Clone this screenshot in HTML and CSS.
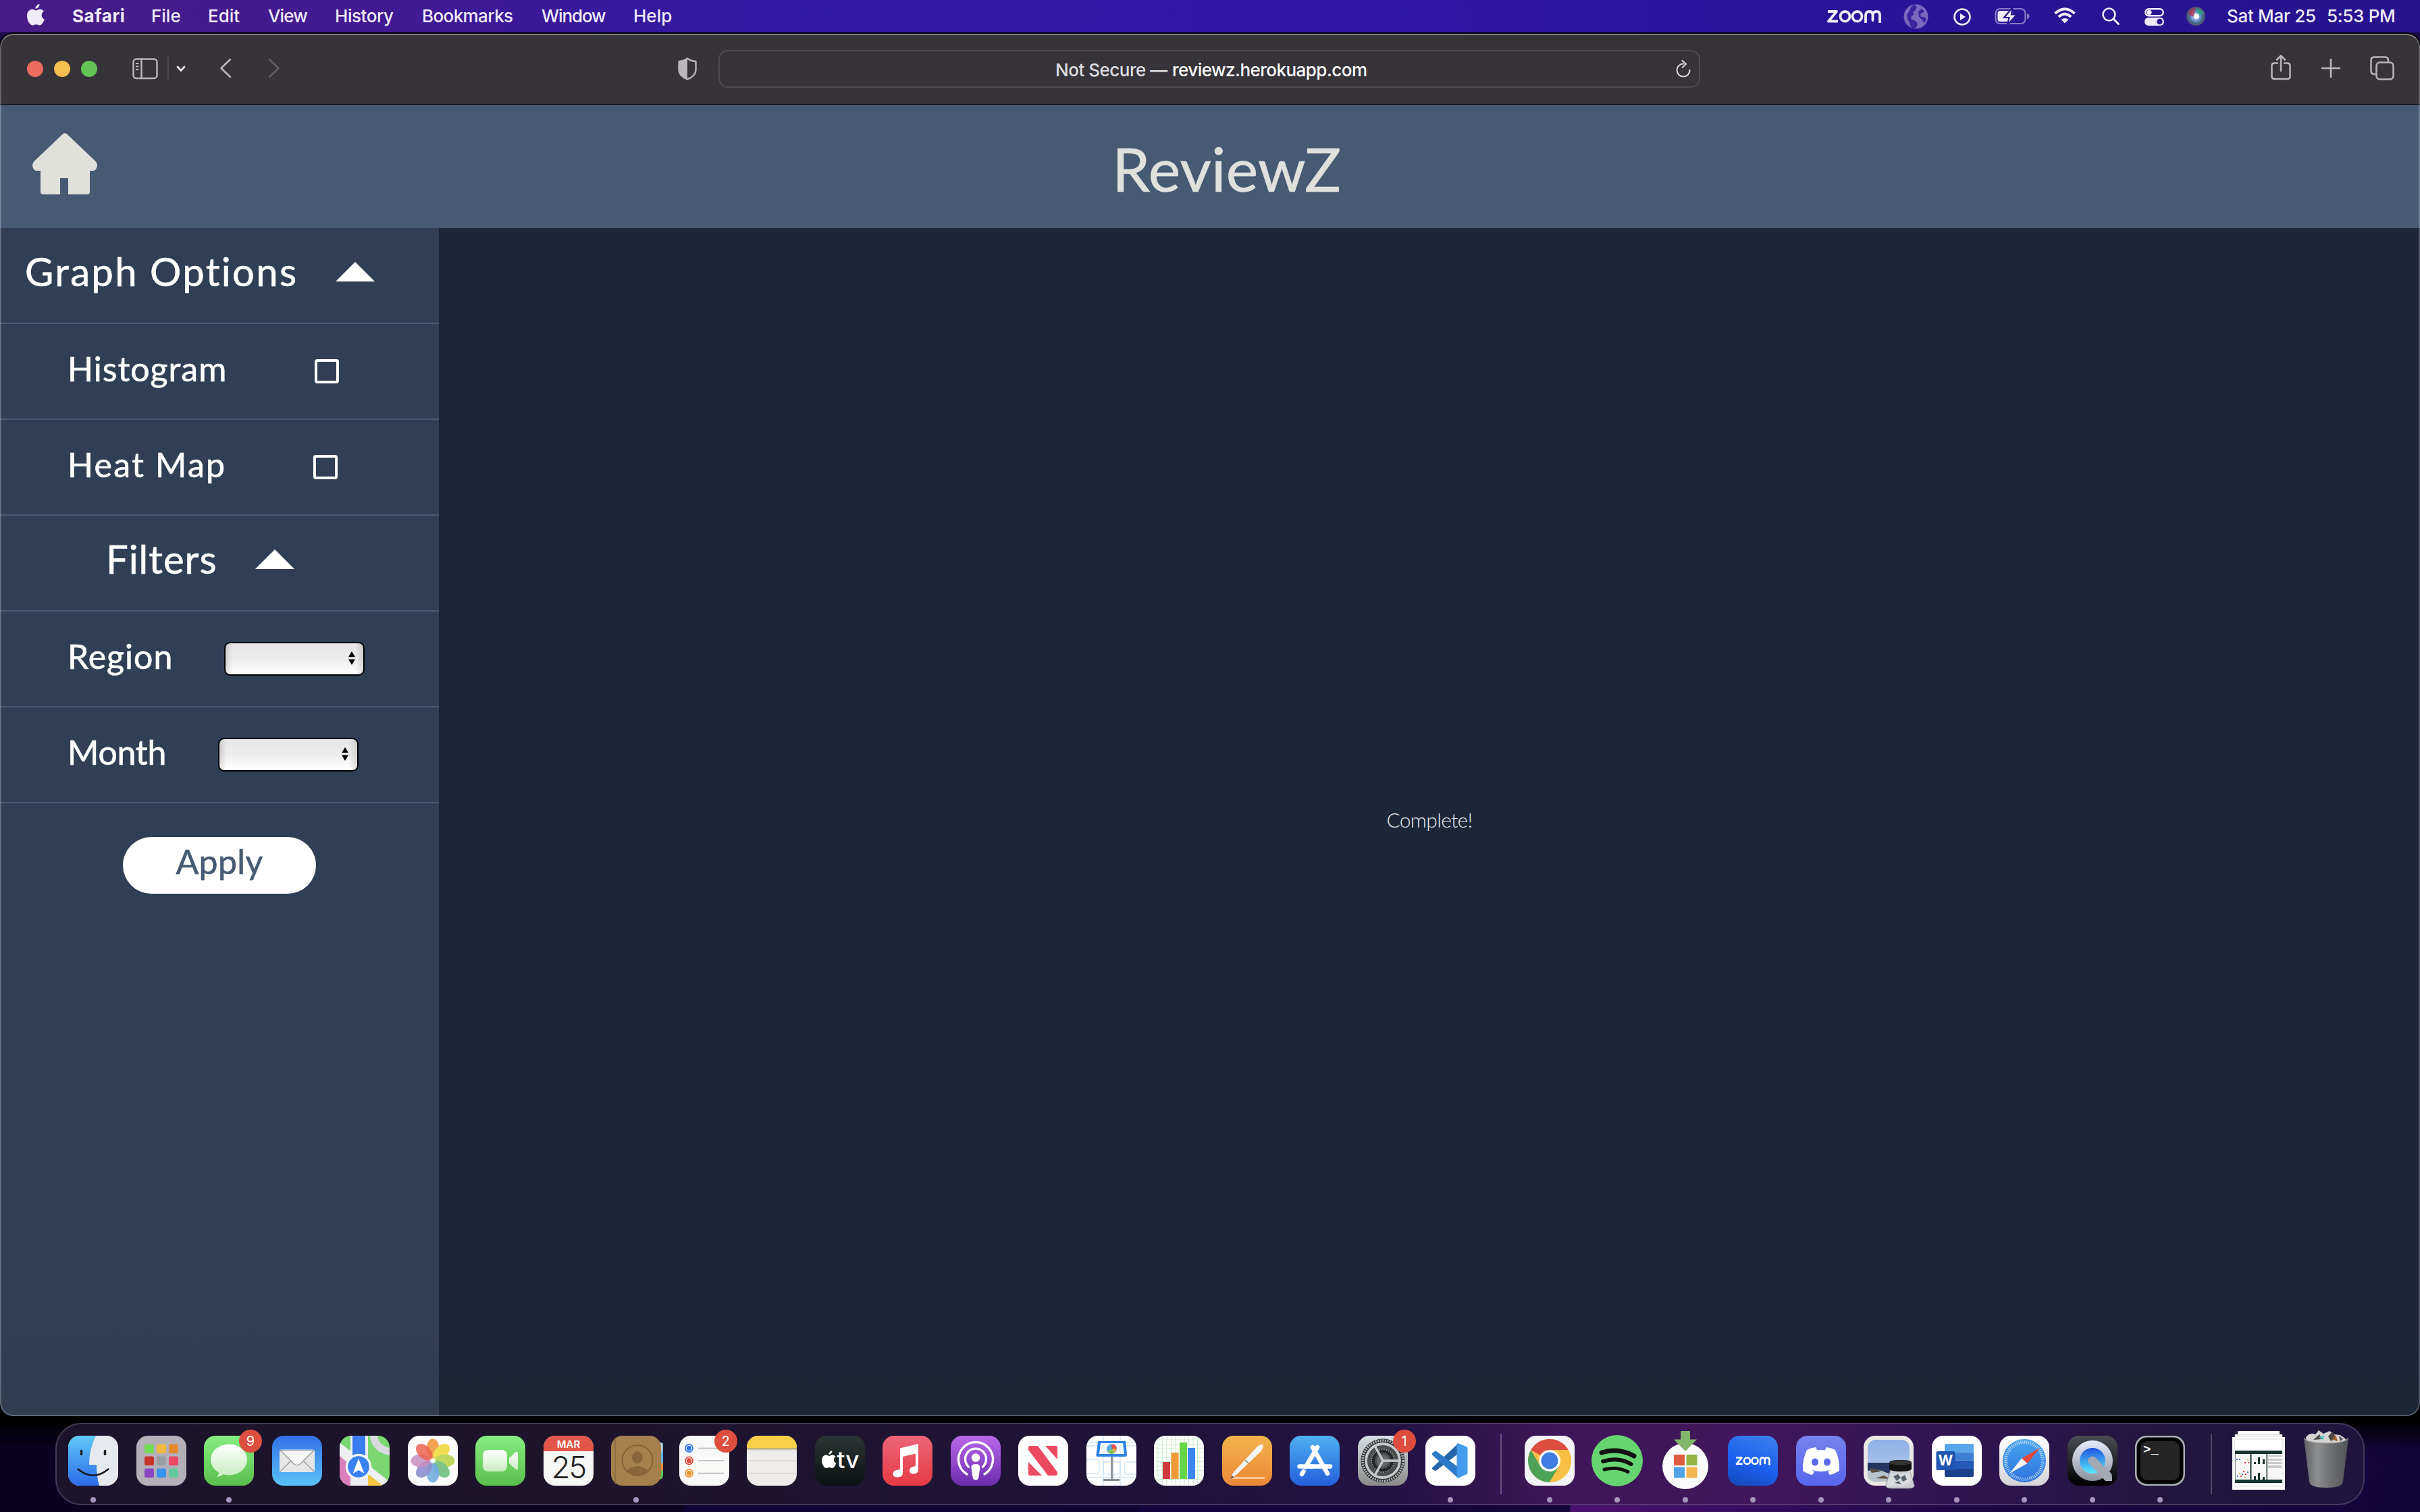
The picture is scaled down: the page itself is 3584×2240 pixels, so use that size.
FILE: index.html
```
<!DOCTYPE html>
<html lang="en">
<head>
<meta charset="utf-8">
<title>ReviewZ</title>
<link rel="stylesheet" href="styles.css">
</head>
<body>
<svg width="0" height="0" class="defs" aria-hidden="true">
  <defs>
    <linearGradient id="bubble" x1="0" y1="0" x2="0" y2="1"><stop offset="0" stop-color="#fff"/><stop offset="1" stop-color="#c9edc2"/></linearGradient>
    <linearGradient id="face" x1="0" y1="0" x2="0" y2="1"><stop offset="0" stop-color="#5fc9f8"/><stop offset="1" stop-color="#2c6be9"/></linearGradient>
    <linearGradient id="steel" x1="0" y1="0" x2="0" y2="1"><stop offset="0" stop-color="#e6ebfa"/><stop offset="1" stop-color="#8c929c"/></linearGradient>
    <linearGradient id="qblue" x1="0" y1="0" x2="0" y2="1"><stop offset="0" stop-color="#1e55e0"/><stop offset="1" stop-color="#5ce9fb"/></linearGradient>
    <linearGradient id="compass" x1="0" y1="0" x2="0" y2="1"><stop offset="0" stop-color="#46a4ee"/><stop offset="1" stop-color="#2f74e2"/></linearGradient>
    <linearGradient id="can" x1="0" y1="0" x2="1" y2="0"><stop offset="0" stop-color="#5f6062"/><stop offset=".3" stop-color="#8d8e90"/><stop offset=".6" stop-color="#6f7072"/><stop offset="1" stop-color="#525356"/></linearGradient>
    <linearGradient id="sky" x1="0" y1="0" x2="0" y2="1"><stop offset="0" stop-color="#8eb0e6"/><stop offset="1" stop-color="#b9cdee"/></linearGradient>
    <radialGradient id="siri"><stop offset="0" stop-color="#fff"/><stop offset=".35" stop-color="#8fa8e8"/><stop offset=".75" stop-color="#3d6a8c"/><stop offset="1" stop-color="#5a5268"/></radialGradient>
  </defs>
</svg>

<div class="desktop">
  <header class="menubar">
    <svg class="apple" viewBox="0 0 26 32"><path fill="#efeaf6" d="M18.600 0c.2 3.600-2.800 6.900-6.100 7C12.200 3.700 15.300.5 18.600 0zM13.300 9.500c1.400 0 3.100-1.700 6-1.700 2.400.1 4.400 1.200 5.600 3-4.800 3-4 9.900.9 11.900-1.300 3.900-4.100 8.700-7 8.700-2 0-2.800-1.200-5.200-1.200s-3.300 1.200-5.200 1.200C4.500 31.400 0 24.500 0 17.700c0-6.600 4.100-9.900 7.800-9.900 2.500 0 4.200 1.700 5.500 1.700z"/></svg>
    <nav class="menus">
      <span class="m-safari">Safari</span><span>File</span><span>Edit</span><span class="t9">View</span><span class="t5">History</span><span class="t6">Bookmarks</span><span class="t11">Window</span><span>Help</span>
    </nav>
    <div class="status">
      <svg class="s-zoom" viewBox="0 0 80 22"><g fill="none" stroke="#efeaf6" stroke-width="3.800" stroke-linejoin="round"><path d="M1 4h13L2 18.500h14"/><ellipse cx="26.500" cy="11.300" rx="7" ry="7.300"/><ellipse cx="44.500" cy="11.300" rx="7" ry="7.300"/><path d="M57 21V9.500Q57.500 4 62.500 4T67.500 9.500V17V9.500Q68 4 73 4T78 9.500V21"/></g></svg>
      <svg class="s-globe" viewBox="0 0 37 37"><circle cx="18.500" cy="18.500" r="18" fill="#7c68c0"/><path fill="#2a1496" d="M16 1l4 3-2 5-4 3 1 4-4 3 1 4 6 2 3 4-2 6-5 1Q10 34 9 28L6 22 5 16 9 10Q10 4 16 1zM27 7l4 4-6 4 1 4 4 0 4 3-3 6-4-5-4-4-1-8z" opacity=".8"/></svg>
      <svg class="s-play" viewBox="0 0 26 26"><circle cx="13" cy="13" r="11.500" fill="none" stroke="#efeaf6" stroke-width="2.600"/><path d="M10 7.800v10.400l8-5.200z" fill="#efeaf6"/></svg>
      <svg class="s-batt" viewBox="0 0 52 26"><rect x="1.500" y="2" width="44" height="22" rx="6.500" fill="none" stroke="#8b7cc8" stroke-width="2.200"/><path d="M48 9q3.500 1 3.500 4t-3.500 4z" fill="#8b7cc8"/><rect x="4.500" y="5" width="22" height="16" rx="3.500" fill="#efeaf6"/><path d="M26.500 0L14 15h7.500L19 26 33 10.500h-8z" fill="#efeaf6" stroke="#281391" stroke-width="2.200"/></svg>
      <svg class="s-wifi" viewBox="0 0 32 24"><g fill="none" stroke="#efeaf6" stroke-width="4"><path d="M1.500 9Q16-4.500 30.500 9"/><path d="M6.800 14Q16 5.500 25.200 14"/></g><path d="M10.500 18q5.500-4 11 0L16 23.500z" fill="#efeaf6"/></svg>
      <svg class="s-find" viewBox="0 0 26 26"><circle cx="10.500" cy="10.500" r="9" fill="none" stroke="#efeaf6" stroke-width="2.600"/><path d="M17 17l7.500 7.500" stroke="#efeaf6" stroke-width="3" stroke-linecap="round"/></svg>
      <svg class="s-ctrl" viewBox="0 0 29 26"><rect x="1.300" y="1.300" width="26.400" height="10" rx="5" fill="none" stroke="#efeaf6" stroke-width="2.400"/><circle cx="7" cy="6.300" r="3.600" fill="#efeaf6"/><rect x="0" y="14" width="29" height="12" rx="6" fill="#efeaf6"/><circle cx="22.500" cy="20" r="4.200" fill="#281391"/></svg>
      <svg class="s-siri" viewBox="0 0 28 28"><circle cx="14" cy="14" r="14" fill="url(#siri)"/><path d="M3 8q5-7 11-7-3 8-1 13-8 2-10-6z" fill="#c02b4c" opacity=".7"/><path d="M15 2q10 2 11 9-6 1-10 4z" fill="#2aa57c" opacity=".7"/><circle cx="15" cy="14" r="4" fill="#fff" opacity=".9"/></svg>
      <span class="s-date">Sat Mar 25</span><span class="s-time">5:53 PM</span>
    </div>
  </header>

  <main class="window">
    <div class="toolbar">
      <i class="light red"></i><i class="light yellow"></i><i class="light green"></i>
      <svg class="b-side" viewBox="0 0 38 32"><g fill="none" stroke="#bab7bc" stroke-width="2.400"><rect x="1.500" y="1.500" width="35" height="28.500" rx="4.500"/><path d="M13.500 2v28"/><path d="M5 8h4.500M5 12.500h4.500M5 17h4.500" stroke-width="2"/></g></svg>
      <i class="split"></i>
      <svg class="b-down" viewBox="0 0 14 10"><path d="M2 2l5 5.500L12 2" fill="none" stroke="#e2e0e4" stroke-width="2.800" stroke-linecap="round" stroke-linejoin="round"/></svg>
      <svg class="b-back" viewBox="0 0 18 30"><path d="M16 2L2.500 15 16 28" fill="none" stroke="#bab7bc" stroke-width="2.600" stroke-linecap="round" stroke-linejoin="round"/></svg>
      <svg class="b-fwd" viewBox="0 0 18 30"><path d="M2 2l13.500 13L2 28" fill="none" stroke="#626065" stroke-width="2.600" stroke-linecap="round" stroke-linejoin="round"/></svg>
      <svg class="b-shield" viewBox="0 0 28 34"><path d="M14 1.500q5 4 12.500 4.500V19q0 8-12.500 13.500Q1.500 27 1.500 19V6Q9 5.500 14 1.500z" fill="none" stroke="#bab7bc" stroke-width="2.400" stroke-linejoin="round"/><path d="M14 1.500v31Q1.500 27 1.500 19V6Q9 5.500 14 1.500z" fill="#bab7bc"/></svg>
      <div class="address">
        <span class="insecure">Not Secure —</span><span class="host">reviewz.herokuapp.com</span>
        <svg class="b-reload" viewBox="0 0 22 26"><path d="M11 5.500A9.500 9.500 0 1 0 20.500 15" fill="none" stroke="#d8d6da" stroke-width="2.100" stroke-linecap="round"/><path d="M9.500 1l5.500 4.800-5.200 5" fill="none" stroke="#d8d6da" stroke-width="2.100" stroke-linecap="round" stroke-linejoin="round"/></svg>
      </div>
      <svg class="b-share" viewBox="0 0 30 38"><g fill="none" stroke="#bab7bc" stroke-width="2.500" stroke-linecap="round" stroke-linejoin="round"><path d="M10 12.500H5.500Q1.500 12.500 1.500 16.500V32Q1.500 36 5.500 36h19Q28.500 36 28.500 32V16.500Q28.500 12.500 24.500 12.500H20"/><path d="M15 24V2M9 7.500L15 1.500l6 6"/></g></svg>
      <svg class="b-plus" viewBox="0 0 28 28"><path d="M14 1v26M1 14h26" stroke="#bab7bc" stroke-width="2.600" stroke-linecap="round"/></svg>
      <svg class="b-tabs" viewBox="0 0 36 36"><g fill="none" stroke="#bab7bc" stroke-width="2.500"><rect x="9.500" y="9.500" width="25" height="25" rx="5"/><path d="M8.500 27H6.500q-5 0-5-5V6.500q0-5 5-5H22q5 0 5 5v2"/></g></svg>
    </div>

    <div class="brand">
      <svg class="home" viewBox="0 0 96 92"><path fill="#e1e1dc" d="M45 1.500Q48 -1 51 1.500L93.500 42Q97 46 95.500 50.500Q94 56 89 56H85V87Q85 91 81 91H53V67H41V91H16Q12 91 12 87V56H7Q2 56 .5 50.500Q-1 46 2.500 42z"/></svg>
      <h1>ReviewZ</h1>
    </div>

    <div class="body">
      <aside class="sidebar">
        <div class="row head"><span class="w-graph">Graph Options</span><svg class="tri" viewBox="0 0 58 29"><path d="M29 0l29 29H0z" fill="#fff"/></svg></div>
        <div class="row opt"><span class="w-hist">Histogram</span><i class="check"></i></div>
        <div class="row opt heat"><span class="w-heat">Heat Map</span><i class="check"></i></div>
        <div class="row head filters"><span class="w-filt">Filters</span><svg class="tri" viewBox="0 0 58 29"><path d="M29 0l29 29H0z" fill="#fff"/></svg></div>
        <div class="row pick"><span class="w-reg">Region</span><div class="select"><svg viewBox="0 0 10 20"><path d="M5 0l5 8.300H0zM0 11.700h10L5 20z"/></svg></div></div>
        <div class="row pick second"><span class="w-mon">Month</span><div class="select month"><svg viewBox="0 0 10 20"><path d="M5 0l5 8.300H0zM0 11.700h10L5 20z"/></svg></div></div>
        <div class="apply"><span>Apply</span></div>
      </aside>
      <section class="content"><p>Complete!</p></section>
    </div>
  </main>

  <footer class="dock">
    <div class="cell on"><svg class="icon" viewBox="0 0 74 74"><rect width="74" height="74" fill="#e6e9ee"/><path d="M0 0H41Q31 20 31 43H42Q42 60 46 74H0z" fill="url(#face)"/><path d="M19.500 22.500v5M54.500 22.500v5" stroke="#222" stroke-width="3.600" stroke-linecap="round"/><path d="M14.500 49.500Q37 68 59.500 49.500" fill="none" stroke="#16181c" stroke-width="2.400" stroke-linecap="round"/></svg></div>
    <div class="cell"><svg class="icon" viewBox="0 0 74 74"><rect width="74" height="74" fill="#b3b0b9"/><g><rect x="12" y="12.500" width="14" height="13.500" rx="2.500" fill="#73dc55"/><rect x="30" y="12.500" width="14" height="13.500" rx="2.500" fill="#f2b93f"/><rect x="48" y="12.500" width="14" height="13.500" rx="2.500" fill="#e6892f"/><rect x="12" y="30.500" width="14" height="13.500" rx="2.500" fill="#c7352a"/><rect x="30" y="30.500" width="14" height="13.500" rx="2.500" fill="#989da1"/><rect x="48" y="30.500" width="14" height="13.500" rx="2.500" fill="#ea4863"/><rect x="12" y="48.500" width="14" height="13.500" rx="2.500" fill="#8a45c0"/><rect x="30" y="48.500" width="14" height="13.500" rx="2.500" fill="#3793ee"/><rect x="48" y="48.500" width="14" height="13.500" rx="2.500" fill="#66c89f"/></g></svg></div>
    <div class="cell on"><svg class="icon g-green" viewBox="0 0 74 74"><path d="M23 53q-1 5-4 8 7-1 11-5z" fill="#dff5da"/><ellipse cx="37" cy="35.500" rx="27" ry="23" fill="url(#bubble)"/></svg><b class="badge">9</b></div>
    <div class="cell"><svg class="icon g-mail" viewBox="0 0 74 74"><rect x="11" y="20.500" width="52" height="33.500" rx="2.500" fill="#e6e6e6"/><path d="M12 53L28 37M62 53L46 37" stroke="#9a9a9a" stroke-width="1.400"/><path d="M12 21.500L32 41.500q5 4 10 0L62 21.500z" fill="#f6f6f6" stroke="#9a9a9a" stroke-width="1.200"/></svg></div>
    <div class="cell"><svg class="icon" viewBox="0 0 74 74"><rect width="74" height="74" fill="#7ad772"/><path d="M0 10L74 68V74H0z" fill="#eef0f2"/><path d="M0 30L17 44V74H0z" fill="#d980bd"/><path d="M40 55L64 74H40z" fill="#f4c443"/><path d="M16 0H42V74H16z" fill="#eceef2"/><path d="M19 0H38V40H19z" fill="#3b7df0"/><path d="M50-2Q52 20 76 24" fill="none" stroke="#d9dade" stroke-width="11"/><ellipse cx="28" cy="46" rx="17.500" ry="17.500" fill="#3a82f3" stroke="#f1f3f6" stroke-width="3.500"/><path d="M28 34l8.500 22L28 51l-8.500 5z" fill="#fff"/></svg></div>
    <div class="cell"><svg class="icon" viewBox="0 0 74 74"><rect width="74" height="74" fill="#fcfcfc"/><g opacity=".88"><ellipse cx="37" cy="19" rx="9.500" ry="14.500" fill="#f1973a"/><ellipse cx="37" cy="19" rx="9.500" ry="14.500" fill="#f0d93a" transform="rotate(45 37 37)"/><ellipse cx="37" cy="19" rx="9.500" ry="14.500" fill="#b7d14b" transform="rotate(90 37 37)"/><ellipse cx="37" cy="19" rx="9.500" ry="14.500" fill="#6cbd79" transform="rotate(135 37 37)"/><ellipse cx="37" cy="19" rx="9.500" ry="14.500" fill="#61a2dc" opacity=".9" transform="rotate(180 37 37)"/><ellipse cx="37" cy="19" rx="9.500" ry="14.500" fill="#7f80c8" opacity=".9" transform="rotate(225 37 37)"/><ellipse cx="37" cy="19" rx="9.500" ry="14.500" fill="#c07fb8" opacity=".85" transform="rotate(270 37 37)"/><ellipse cx="37" cy="19" rx="9.500" ry="14.500" fill="#ea4f3c" opacity=".85" transform="rotate(315 37 37)"/></g></svg></div>
    <div class="cell"><svg class="icon g-green" viewBox="0 0 74 74"><rect x="11" y="21" width="36" height="32" rx="8" fill="url(#bubble)"/><path d="M50 33L60 24q3-1 3 2v22q0 3-3 2L50 41z" fill="url(#bubble)"/></svg></div>
    <div class="cell"><svg class="icon" viewBox="0 0 74 74"><rect width="74" height="74" fill="#f7f7f5"/><rect width="74" height="23" fill="#e3574b"/><text x="37" y="18" class="mar">MAR</text><text x="37" y="62.500" class="day">25</text></svg></div>
    <div class="cell on"><svg class="icon wide" viewBox="0 0 78 74"><rect x="50" y="10" width="27" height="55" rx="6" fill="#58c659"/><rect x="50" y="10" width="27" height="42" rx="3" fill="#f09036"/><rect x="50" y="10" width="27" height="31" rx="3" fill="#62b6ea"/><rect x="50" y="10" width="26" height="16" rx="5" fill="#c9c9c4"/><rect width="74" height="74" rx="17" fill="#a5804c"/><path d="M6 3v68" stroke="#8b6a3b" stroke-width="1.500"/><circle cx="39" cy="36.500" r="22.500" fill="none" stroke="#84633a" stroke-width="2"/><ellipse cx="39" cy="32" rx="8" ry="9" fill="#886639"/><path d="M23 52Q39 38 55 52Q39 67 23 52z" fill="#886639"/></svg></div>
    <div class="cell"><svg class="icon" viewBox="0 0 74 74"><rect width="74" height="74" fill="#f9f9f8"/><path d="M28 18.500h38M28 37h38M28 55.500h38" stroke="#b4b4b8" stroke-width="1.600"/><g stroke-width="1.700" fill="#fff"><circle cx="14.500" cy="18.500" r="5.600" stroke="#2f78ec"/><circle cx="14.500" cy="37" r="5.600" stroke="#df4a3c"/><circle cx="14.500" cy="55.500" r="5.600" stroke="#e8912f"/></g><circle cx="14.500" cy="18.500" r="3.700" fill="#2f78ec"/><circle cx="14.500" cy="37" r="3.700" fill="#df4a3c"/><circle cx="14.500" cy="55.500" r="3.700" fill="#e8912f"/></svg><b class="badge">2</b></div>
    <div class="cell"><svg class="icon" viewBox="0 0 74 74"><rect width="74" height="74" fill="#efede9"/><rect width="74" height="19" fill="#f8cf48"/><path d="M0 19.500h74" stroke="#aaa594" stroke-width="1.800"/><path d="M1 22.500h74" stroke="#b5b3ae" stroke-width="1.200" stroke-dasharray="1 1.500"/><path d="M0 37h74M0 55.500h74" stroke="#cfcdca" stroke-width="1.200"/></svg></div>
    <div class="cell"><svg class="icon g-tv" viewBox="0 0 74 74"><path transform="translate(10 22) scale(.83)" fill="#fff" d="M18.600 0c.2 3.600-2.800 6.900-6.100 7C12.200 3.700 15.300.5 18.600 0zM13.300 9.500c1.400 0 3.100-1.700 6-1.700 2.400.1 4.400 1.200 5.600 3-4.800 3-4 9.900.9 11.900-1.300 3.900-4.100 8.700-7 8.700-2 0-2.800-1.200-5.200-1.200s-3.300 1.200-5.200 1.200C4.500 31.400 0 24.500 0 17.700c0-6.600 4.100-9.900 7.800-9.900 2.500 0 4.200 1.700 5.500 1.700z"/><text x="32.500" y="48" class="tv">tv</text></svg></div>
    <div class="cell"><svg class="icon g-music" viewBox="0 0 74 74"><path d="M26 18.500L53 12V50q0 6.500-7 6.500-6 0-6-5 0-5 7-6l2-.5V26.500L30 31V55q0 6.500-7.500 6.500-7 0-7-5 0-5 7-6l3.500-1z" fill="#fff"/></svg></div>
    <div class="cell"><svg class="icon g-pod" viewBox="0 0 74 74"><g fill="none" stroke="#fff" stroke-width="3.400" stroke-linecap="round"><path d="M24 57A25.500 25.500 0 1 1 50 57"/><path d="M26.500 46A15.500 15.500 0 1 1 47.500 46"/></g><circle cx="37" cy="32.500" r="6.300" fill="#fff"/><path d="M30.500 47q0-5 6.500-5t6.500 5l-2 14q-.5 4.500-4.500 4.500T32.500 61z" fill="#fff"/></svg></div>
    <div class="cell"><svg class="icon" viewBox="0 0 74 74"><rect width="74" height="74" fill="#fff"/><path d="M15 17q0-2 2-2h12L58 54v3q0 2-2 2H44L15 21zM40 15h16q2 0 2 2v18zM15 39L35 59H17q-2 0-2-2z" fill="#ec4a61"/></svg></div>
    <div class="cell"><svg class="icon" viewBox="0 0 74 74"><rect width="74" height="74" fill="#fff"/><g fill="none" stroke="#bcdcf3" stroke-width="1"><path d="M0 10h74M0 15h74M25 0v74M50 0v74M0 35h15q4 0 4 4v13q0 4-4 4H0M25 39h25v14q0 4-4 4H29q-4 0-4-4zM74 39H60q-4 0-4 4v10q0 4 4 4h14M0 62h74"/></g><path d="M36 30h3.500v35H36z" fill="#92989f"/><path d="M25 64h24v3H25z" fill="#8a8a8c"/><path d="M17 8h41l2 20q0 3-2 3H17q-3 0-2.500-3z" fill="#2d83e4"/><path d="M21 11h33l2 16H19z" fill="#eef6fd"/><ellipse cx="37.500" cy="19.500" rx="7.500" ry="7" fill="#58a9e4"/><path d="M37.500 19.500v-7q7 0 7.500 7z" fill="#e15245"/><path d="M37.500 19.500H45q-1 4-4 6z" fill="#f1ae41"/><path d="M37.500 19.500L41 26q-6 3-10-3z" fill="#7cc35b"/></svg></div>
    <div class="cell"><svg class="icon" viewBox="0 0 74 74"><rect width="74" height="74" fill="#fff"/><path d="M6 0v74M12.500 0v74M19 0v74M25.500 0v74M32 0v74M38.500 0v74M45 0v74M51.500 0v74M58 0v74M64.500 0v74M0 6h74M0 12.500h74M0 19h74M0 25.500h74M0 32h74M0 38.500h74M0 45h74M0 51.500h74M0 58h74M0 64.500h74" stroke="#cdefc9" stroke-width="1"/><rect x="13" y="39" width="11" height="25" fill="#d0383f"/><rect x="25.500" y="25" width="11" height="39" fill="#f09a37"/><rect x="38" y="10" width="11" height="54" fill="#66d548"/><rect x="50" y="18" width="11" height="46" fill="#3d86ee"/></svg></div>
    <div class="cell"><svg class="icon g-pages" viewBox="0 0 74 74"><path d="M14 62.500h49" stroke="#f9d3ae" stroke-width="2.600"/><path d="M12.500 64l3.500-9L52 16q6-5 8.500-1.500 1 3-3.500 9L22 57z" fill="#f4f4f4"/><path d="M12.500 64l2-5 3 2.500z" fill="#444"/><path d="M34 36l5 5" stroke="#8a8a8a" stroke-width="1.500"/></svg></div>
    <div class="cell"><svg class="icon g-store" viewBox="0 0 74 74"><g stroke="#fff" stroke-width="6.600" stroke-linecap="round"><path d="M41 17L24 46M34 17L56 56M14.500 45.500h19M46 45.500H60M20.500 53l-2.500 4"/><path d="M29 45.500h15"/></g></svg></div>
    <div class="cell"><svg class="icon g-set" viewBox="0 0 74 74"><circle cx="37" cy="37" r="32.500" fill="#2c2d2e"/><circle cx="37" cy="37" r="30" fill="none" stroke="#b5b8ba" stroke-width="3.500" stroke-dasharray="2 1.600"/><circle cx="37" cy="37" r="25" fill="#4b4d4e" stroke="#c5c8ca" stroke-width="3.800"/><circle cx="37" cy="37" r="15" fill="none" stroke="#25272a" stroke-width="6"/><circle cx="37" cy="37" r="17" fill="none" stroke="#8c8f91" stroke-width="2" stroke-dasharray="2 1.500"/><circle cx="37" cy="37" r="9" fill="#65686a"/><path d="M37 37H62M37 37L25 15M37 37L25 59" stroke="#c5c8ca" stroke-width="3.600"/></svg><b class="badge">1</b></div>
    <div class="cell on"><svg class="icon" viewBox="0 0 74 74"><rect width="74" height="74" fill="#fff"/><path d="M10 47.500L48 12v15L16 51.500q-2 1-3-.2l-3-2z" fill="#2566a9"/><path d="M10 26l4-3q1.500-.6 3 .4L48 46v16.500L10 28.500z" fill="#2f7bc9"/><path d="M48 11l13.500 5.500q1 .6 1 2v36.500q0 1.400-1 2L48 63q-1.500-.5-1.500-2V13q0-1.500 1.500-2z" fill="#459ced"/></svg></div>
    <i class="rule"></i>
    <div class="cell on"><svg class="icon" viewBox="0 0 74 74"><rect width="74" height="74" fill="#f3f2f7"/><circle cx="37" cy="37" r="32" fill="#f7c045"/><path d="M37 37L9.300 21A32 32 0 0 1 64.700 21z" fill="#dd4d40"/><path d="M9.300 21A32 32 0 0 0 37 69L51 45 37 37 22.500 44z" fill="#4ea257"/><path d="M37 21H64.700A32 32 0 0 1 37 69L51 45z" fill="#f7c045"/><circle cx="37" cy="37" r="16" fill="#fff"/><circle cx="37" cy="37" r="12.500" fill="#3e7de2"/></svg></div>
    <div class="cell on"><svg class="icon round" viewBox="0 0 76 76"><circle cx="38" cy="38" r="38" fill="#66d571"/><g fill="none" stroke="#111" stroke-linecap="round"><path d="M15 26Q40 18 63 31" stroke-width="7"/><path d="M17 39Q40 32 58.500 43" stroke-width="6"/><path d="M19 51Q38 46 54 54.500" stroke-width="5"/></g></svg></div>
    <div class="cell on"><svg class="icon tall" viewBox="0 0 74 90"><ellipse cx="37" cy="54" rx="34" ry="34" fill="#fafafa"/><path d="M20 37h16v16H20z" fill="#df5c3e"/><path d="M38.500 37h16v16h-16z" fill="#92b544"/><path d="M20 55.500h16v16H20z" fill="#4fa3e6"/><path d="M38.500 55.500h16v16h-16z" fill="#f3b64e"/><path d="M30 2h14v12.500h10L37 32 20 14.500h10z" fill="#82b76a"/></svg></div>
    <div class="cell on"><svg class="icon g-zoom" viewBox="0 0 74 74"><g transform="translate(11.500 30) scale(.64)" fill="none" stroke="#fff" stroke-width="4" stroke-linejoin="round"><path d="M1 4h13L2 18.500h14"/><ellipse cx="26.500" cy="11.300" rx="7" ry="7.300"/><ellipse cx="44.500" cy="11.300" rx="7" ry="7.300"/><path d="M57 21V9.500Q57.500 4 62.500 4T67.500 9.500V17V9.500Q68 4 73 4T78 9.500V21"/></g></svg></div>
    <div class="cell on"><svg class="icon g-disc" viewBox="0 0 74 74"><path d="M29 17q-7 1-13 4-7 15-6 31 7 5 14 6l3-5-4-2.500q14 5 28 0L47 53l3 5q8-2 14-6 1-16-6-31-6-3-13-4l-2 4H31z" fill="#fff"/><ellipse cx="28" cy="39" rx="5" ry="5.500" fill="#5b69ea"/><ellipse cx="46" cy="39" rx="5" ry="5.500" fill="#5b69ea"/></svg></div>
    <div class="cell on"><svg class="icon preview" viewBox="0 0 78 80"><rect width="74" height="74" rx="17" fill="#ebe8e6"/><rect x="6" y="6" width="62" height="62" rx="12" fill="url(#sky)"/><path d="M6 40h62v20H6z" fill="#24365f"/><path d="M6 52q14-4 26 2t36 0v3q0 11-12 11H18Q6 68 6 57z" fill="#b6c3cb"/><path d="M8 48l12 2 6 3-14 2zM18 63l12-4 10 5z" fill="#5d4c40"/><path d="M40 50h28l7 23q1 5-8 5H41q-9 0-8-5z" fill="#d9dcdd" opacity=".92" stroke="#8a8d90"/><path d="M44 60l7-3 4 5-6 5zM55 62l6-4 3 7-6 3zM46 70l6-3 4 5z" fill="#54616d"/><path d="M38 40q0-4 16.500-4T71 40v10q-4 3-16.500 3T38 50z" fill="#111"/><ellipse cx="54.500" cy="40" rx="16" ry="3.500" fill="#333"/></svg></div>
    <div class="cell on"><svg class="icon" viewBox="0 0 74 74"><rect width="74" height="74" fill="#fff"/><path d="M19 14q0-2 2-2h39q2 0 2 2v10.500H19z" fill="#5aa6ea"/><path d="M19 24.500h43v12H19z" fill="#3d7fd3"/><path d="M19 36.500h43v12.500H19z" fill="#2559b8"/><path d="M19 49h43v10q0 2-2 2H21q-2 0-2-2z" fill="#1a428c"/><rect x="6.500" y="23" width="28" height="28" rx="2.500" fill="#1f54b0"/><text x="20.500" y="44" class="word">W</text></svg></div>
    <div class="cell on"><svg class="icon g-light" viewBox="0 0 74 74"><circle cx="37" cy="37" r="32" fill="url(#compass)"/><circle cx="37" cy="37" r="27.500" fill="none" stroke="#cfe6fb" stroke-width="5" stroke-dasharray="1 1.880"/><path d="M60 18L41.500 41 33 33.500z" fill="#e2473c"/><path d="M15 56L33 33.500 41.500 41z" fill="#f2f2f2"/></svg></div>
    <div class="cell on"><svg class="icon g-qt" viewBox="0 0 74 74"><circle cx="37" cy="37" r="30" fill="url(#steel)"/><circle cx="37" cy="37" r="19" fill="url(#qblue)"/><path d="M32 33q5-5 10 0L60 52q6 3 6 9v6H56L49 59 31 40q-2-4 1-7z" fill="#a3a8b3"/></svg></div>
    <div class="cell on"><svg class="icon" viewBox="0 0 74 74"><rect width="74" height="74" fill="#a9b1b5"/><rect x="2.500" y="2.500" width="69" height="69" rx="15" fill="#000"/><rect x="8" y="8" width="58" height="58" rx="10" fill="#252525"/><text x="12" y="26" class="term">&gt;_</text></svg></div>
    <i class="rule two"></i>
    <div class="cell"><svg class="icon stack" viewBox="0 0 78 87"><path d="M8 0h62v10H8z" fill="#fff"/><path d="M4 5h70v8H4z" fill="#f3f3f3" stroke="#bbb" stroke-width=".6"/><path d="M0 9h78v78H0z" fill="#fff"/><path d="M3 12h72v70H3z" fill="none" stroke="#dcdcdc"/><path d="M4 29h70v48H4z" fill="#16332f"/><path d="M4.500 34h22v38h-22zM28.500 34h22v38h-22zM52 34h22v38H52z" fill="#f6f6f6"/><path d="M32 49v-3h3v3zM38 49V39h3v10zM45 49v-7h3v7zM32 72v-5h3v5zM38 72V62h3v10zM45 72v-4h3v4z" fill="#16332f"/><path d="M53 36h20v2H53zM53 41h20v3H53zM53 46h20v3H53zM53 51h20v4H53z" fill="#c9c9c9"/><path d="M6 41h2v2H6zM10 41h2v2h-2zM14 63h2v2h-2zM22 60h2v2h-2zM7 66h2v2H7z" fill="#5a79e0"/><path d="M18 46h2v2h-2zM23 46h2v2h-2zM16 59h2v2h-2zM12 66h2v2h-2zM19 63h2v2h-2z" fill="#df4348"/><path d="M22 41h2v2h-2zM10 62h2v2h-2zM18 68h2v2h-2z" fill="#e6c04a"/></svg></div>
    <div class="cell"><svg class="icon trash" viewBox="0 0 66 86"><path d="M3 10Q10 2 17 6L22 0l7 5 9-4 7 5 9 1 8 6-2 12H5z" fill="#d5d3d1"/><path d="M14 14l9-8 4 7zM36 9l6-7 6 9-8 5zM52 8l6 5-4 3z" fill="#4f4a48"/><path d="M22 10l9-2-3 6z" fill="#54c3c0"/><path d="M42 14l5-7 3 9z" fill="#a4622c"/><path d="M0 11Q4 19 33 19T66 11L58 76q-1 9-25 9T8 76z" fill="url(#can)"/><path d="M0 11Q4 19 33 19T66 11" fill="none" stroke="#98999b" stroke-width="1.200"/></svg></div>
  </footer>
</div>
</body>
</html>
```
FILE: styles.css
```
* { box-sizing: border-box; }
body { margin: 0; background: #0c0228; font-family: Inter, "Liberation Sans", sans-serif; }
svg { display: block; flex: none; }
i, b { font-style: normal; flex: none; }
.defs { position: absolute; }

.desktop {
  width: 3584px; height: 2240px; overflow: hidden;
  display: flex; flex-direction: column;
  background:
    linear-gradient(180deg, #1a0a48 0, #1a0a48 100px, #000 140px, #000 2106px, transparent 2150px),
    linear-gradient(100deg, #0b0222 0, #0b0222 35.3%, #0e0434 35.4%, #0e0434 52.3%, #15053d 52.4%, #15053d 68.3%, #4a106d 68.4%, #3a0d62 74%, #1d0745 83%, #12053a 100%);
}

/* Menu bar */
.menubar {
  height: 48px; flex: none; display: flex; align-items: center; padding: 0 36px 0 40px;
  background: linear-gradient(90deg, #481c86 0, #401a93 16%, #3119a3 31%, #3016a6 55%, #2a149c 72%, #27138e 100%);
  color: #efeaf6; font-size: 26px; font-weight: 500; line-height: 46px;
}
.apple { width: 26px; height: 32px; margin: -4px 41px 0 0; }
.menus, .status { display: flex; align-items: center; height: 46px; margin-top: -1px; white-space: pre; }
.menus { display: grid; grid-template-columns: 117px 84px 89px 99px 129px 177px 136px 60px; }
.m-safari { font-weight: 700; letter-spacing: .6px; }
.t9 { letter-spacing: -.9px; }
.t5 { letter-spacing: -.45px; }
.t6 { letter-spacing: -.6px; }
.t11 { letter-spacing: -1.1px; }
.status { margin-left: auto; }
.s-zoom { width: 80px; height: 22px; margin: 1px 33px 0 0; }
.s-globe { width: 37px; height: 37px; margin: 1px 37px 0 0; }
.s-play { width: 26px; height: 26px; margin: 2px 35px 0 0; }
.s-batt { width: 52px; height: 26px; margin: 1px 36px 0 0; }
.s-wifi { width: 32px; height: 24px; margin: -1px 39px 0 0; }
.s-find { width: 26px; height: 26px; margin: 1px 37px 0 0; }
.s-ctrl { width: 29px; height: 26px; margin: 3px 33px 0 0; }
.s-siri { width: 28px; height: 28px; margin: 1px 32px 0 0; }
.s-date { width: 148px; letter-spacing: -.32px; }
.s-time { width: 102px; letter-spacing: -.32px; }

/* Browser window */
.window {
  position: relative; height: 2048px; margin-top: 2px; flex: none; overflow: hidden;
  display: flex; flex-direction: column; border-radius: 20px; box-shadow: 0 0 0 2px #000;
}
.window::after {
  content: ""; position: absolute; inset: 0; border-radius: 20px;
  border: 2px solid rgba(255, 255, 255, .24); border-top-color: rgba(255, 255, 255, .38);
}
.toolbar {
  height: 105px; flex: none; display: flex; align-items: center; padding: 0 38px 0 40px;
  background: #373439; border-bottom: 1px solid #000;
}
.light { width: 24px; height: 24px; border-radius: 50%; margin-right: 16px; }
.red { background: #ed6a5f; }
.yellow { background: #f5bf4f; }
.green { background: #62c554; margin-right: 52px; }
.b-side { width: 38px; height: 32px; }
.split { width: 2px; height: 36px; margin: 0 12px 0 14px; background: #4c494e; }
.b-down { width: 14px; height: 10px; margin: -1px 50px 0 -1px; }
.b-back { width: 18px; height: 30px; margin: -2px 54px 0 0; }
.b-fwd { width: 18px; height: 30px; margin-top: -2px; }
.b-shield { width: 28px; height: 34px; margin: 0 32px 0 589px; }
.address {
  width: 1454px; height: 56px; flex: none; display: flex; align-items: center; padding: 0 12px 0 497px;
  border: 2px solid #4d4a4f; border-radius: 14px; font-size: 26px; font-weight: 500; white-space: pre;
}
.insecure { width: 173px; color: #dfdee0; letter-spacing: -.48px; padding-top: 2px; }
.host { color: #fff; letter-spacing: -.53px; padding-top: 2px; }
.b-reload { width: 22px; height: 26px; margin-left: auto; }
.b-share { width: 30px; height: 38px; margin: -5px 45px 0 auto; }
.b-plus { width: 28px; height: 28px; margin: -3px 44px 0 0; }
.b-tabs { width: 36px; height: 36px; margin-top: -3px; }

/* Application */
.brand {
  height: 183px; flex: none; display: flex; align-items: center; padding-left: 48px; background: #475a74;
}
.home { width: 96px; height: 92px; margin-top: -7px; }
.brand h1 { margin: 4px 0 0 1503px; font: 400 90px/108px Lato, sans-serif; letter-spacing: .2px; color: #e1e1dc; -webkit-text-stroke: .6px #e1e1dc; }
.body { flex: 1; display: flex; font-family: Lato, "Open Sans", sans-serif; }
.sidebar {
  width: 650px; color: #fff; text-align: left; -webkit-text-stroke: .6px currentColor;
  background: linear-gradient(180deg, #313f56 0, #313f56 92%, #2e3d50 100%);
}
.row {
  height: 142px; display: flex; align-items: center; border-bottom: 2px solid #475a74; white-space: pre;
}
.head { padding: 0 0 13px 37px; gap: 56px; font-size: 58px; }
.head.filters { padding-left: 157px; }
.tri { width: 58px; height: 29px; margin-top: 2px; }
.opt { padding-left: 100px; gap: 130px; font-size: 50px; }
.heat { gap: 129px; }
.pick { padding-left: 100px; gap: 76px; font-size: 50px; }
.pick.second { gap: 77px; }
.opt span, .pick span { padding-bottom: 9px; }
.w-graph { letter-spacing: 2.33px; }
.w-hist, .w-reg { letter-spacing: 1px; }
.w-filt { letter-spacing: 1px; }
.w-heat { letter-spacing: 2.2px; }
.w-mon { letter-spacing: -.24px; }
.check { width: 36px; height: 36px; border: 4px solid #fff; border-radius: 4px; }
.select {
  width: 208px; height: 50px; display: flex; align-items: center; justify-content: flex-end; padding: 0 12px 2px 0;
  border: 2px solid #000; border-radius: 9px;
  background: linear-gradient(90deg, rgba(0,0,0,.12), transparent 5%, transparent 94%, rgba(0,0,0,.12)), linear-gradient(180deg, #e5e5e5 0, #ededed 50%, #fff 100%);
}
.select svg { width: 10px; height: 20px; }
.month { padding-right: 13px; }
.apply {
  width: 286px; height: 84px; margin: 50px 0 0 182px; border-radius: 42px; background: #fff;
  display: flex; justify-content: center; padding-bottom: 11px; font-size: 50px; line-height: 73px;
  letter-spacing: .35px; color: #475a74;
}
.content {
  flex: 1; display: flex; align-items: center; justify-content: center;
  background: linear-gradient(180deg, #1d2538 0, #1d2538 93%, #1c2636 100%);
}
.content p { margin: 0; padding-bottom: 9px; font-size: 30px; font-weight: 300; letter-spacing: -.69px; color: #e6e8ec; }

/* Dock */
.dock {
  width: 3420px; height: 122px; margin: 10px 0 0 82px; flex: none; display: flex; padding: 17px 0 0 4px;
  border: 2px solid rgba(150, 135, 175, .32); border-radius: 38px;
  background: linear-gradient(90deg, #1c142c 0, #1d142a 22%, #1f1338 45%, #221242 58%, #3f1659 65%, #41165c 74%, #2e1550 83%, #21163d 92%, #1f153c 100%);
}
.cell { position: relative; width: 100.500px; height: 100px; flex: none; display: flex; flex-direction: column; align-items: center; }
.cell.on::after {
  content: ""; position: absolute; top: 91px; left: 46px; width: 8px; height: 8px; border-radius: 50%; background: #a594bb;
}
.icon { width: 74px; height: 74px; border-radius: 17px; }
.wide { width: 78px; margin-left: 4px; border-radius: 0; }
.round { width: 76px; height: 76px; margin-top: -1px; border-radius: 0; }
.tall { width: 74px; height: 90px; margin-top: -9px; border-radius: 0; }
.preview { width: 78px; height: 80px; margin-left: 4px; border-radius: 0; }
.stack { width: 78px; height: 87px; margin: -7px 2px 0 0; border-radius: 0; }
.trash { width: 66px; height: 86px; margin: -8px 3px 0 0; border-radius: 0; }
.g-green { background: linear-gradient(#86ed80, #5abf4b); }
.g-mail { background: linear-gradient(#3370e8, #59c3f7); }
.g-tv { background: linear-gradient(#2b3533, #0c1012); }
.g-music { background: linear-gradient(#ec6579, #e63a44); }
.g-pod { background: linear-gradient(#b968ea, #6a2cab); }
.g-pages { background: linear-gradient(#f3b34c, #ec8837); }
.g-store { background: linear-gradient(#4fb0ef, #235fdb); }
.g-set { background: linear-gradient(#d5dfe5, #8b8b89); }
.g-zoom { background: linear-gradient(20deg, #1349b8, #1c60f0 45%, #3d83ea); }
.g-disc { background: linear-gradient(#7582ee, #5766ec); }
.g-light { background: linear-gradient(#fff, #d4d4d4); }
.g-qt { background: linear-gradient(#494d52, #000); }
.badge {
  position: absolute; top: -9px; left: 65px; width: 34px; height: 34px; border-radius: 50%;
  background: #de4e3f; color: #fff; font-size: 20px; font-weight: 400; line-height: 34px; text-align: center;
}
.rule { width: 2px; height: 90px; margin: -3px 21px 0 23px; background: #6a5279; }
.rule.two { margin: -3px 20px 0 24px; background: #54496d; }
.mar { font: 600 15px Inter, sans-serif; text-anchor: middle; fill: #fff; }
.day { font: 300 45px Inter, sans-serif; text-anchor: middle; fill: #222; letter-spacing: -2px; }
.tv { font: 500 35px Inter, sans-serif; fill: #fff; }
.word { font: 700 21px Inter, sans-serif; text-anchor: middle; fill: #fff; }
.term { font: 700 19px "Liberation Mono", monospace; fill: #fff; }
```
